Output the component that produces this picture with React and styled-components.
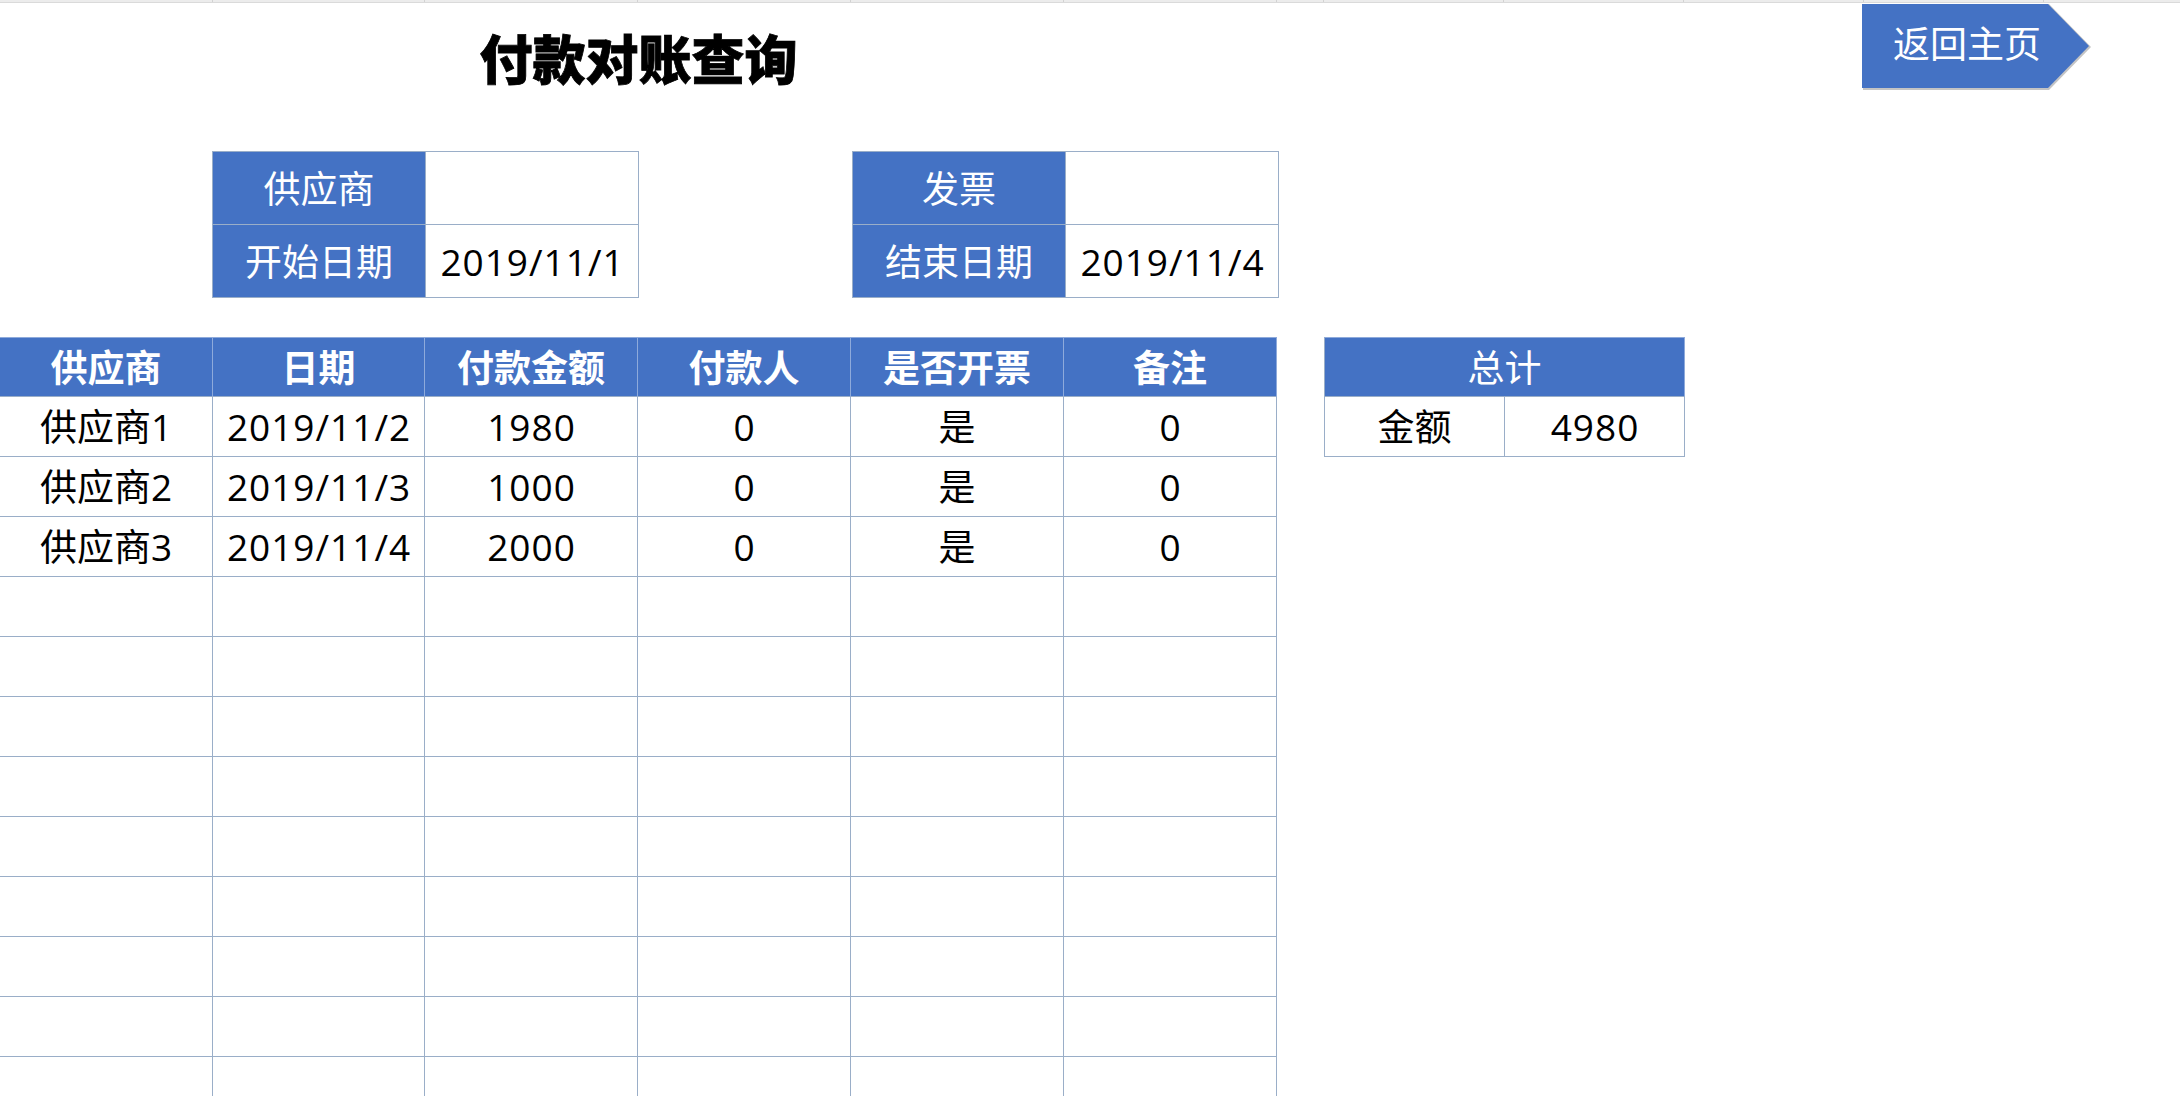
import React from 'react';
import styled, { createGlobalStyle } from 'styled-components';

const GlobalStyle = createGlobalStyle`
    body {
        margin: 0;
        background: #fff;
        overflow: hidden;
        font-family: "Open Sans", "Noto Sans CJK SC", sans-serif;
    }
`;

const BLUE = '#4472c4';
const LINE = '#9aaec8';
const HEAD_LINE = '#8eaadb';

// widths of the sheet columns shown in the thin header strip
const stripCols = [213, 212, 213, 213, 213, 213, 47, 180, 180, 180, 180, 180];

const columns = ['供应商', '日期', '付款金额', '付款人', '是否开票', '备注'];
const colWidths = [213, 212, 213, 213, 213, 213];

const rows = [
    ['供应商1', '2019/11/2', '1980', '0', '是', '0'],
    ['供应商2', '2019/11/3', '1000', '0', '是', '0'],
    ['供应商3', '2019/11/4', '2000', '0', '是', '0'],
];
const EMPTY_ROWS = 9;

const Sheet = styled.div`
    width: 2180px;
    height: 1096px;
    overflow: hidden;
    background: #fff;
`;

const Strip = styled.div`
    display: flex;
    height: 2px;
    background: #ececec;
    border-bottom: 1px solid #dadada;
`;

const StripCol = styled.div`
    flex: 0 0 ${(p) => p.$w}px;
    box-sizing: border-box;
    border-right: 1px solid #d2d2d2;
`;

const TopBar = styled.div`
    display: flex;
    align-items: flex-start;
    height: 148px;
`;

const Title = styled.h1`
    margin: 0;
    width: 1277px;
    height: 112px;
    display: flex;
    align-items: center;
    justify-content: center;
    font-size: 53px;
    font-weight: 900;
    color: #000;
    line-height: 1;
    -webkit-text-stroke: 0.8px #000;
`;

const HomeButton = styled.div`
    position: relative;
    margin-left: 585px;
    margin-top: 1px;
    width: 232px;
    height: 87px;
    cursor: pointer;
`;

const ButtonShape = styled.svg`
    position: absolute;
    inset: 0;
`;

const ButtonLabel = styled.span`
    position: absolute;
    left: 31px;
    top: 0;
    height: 79px;
    display: flex;
    align-items: center;
    font-size: 37px;
    color: #fff;
    line-height: 1;
`;

const ParamsRow = styled.div`
    display: flex;
    gap: 213px;
    padding-left: 212px;
`;

const ParamBox = styled.div`
    display: grid;
    grid-template-columns: 213px 213px;
    border-top: 1px solid ${LINE};
    border-left: 1px solid ${LINE};
`;

const ParamCell = styled.div`
    box-sizing: border-box;
    height: 73px;
    display: flex;
    align-items: center;
    justify-content: center;
    font-size: 37px;
    line-height: 1;
    color: ${(p) => (p.$label ? '#fff' : '#000')};
    background: ${(p) => (p.$label ? BLUE : '#fff')};
    border-right: 1px solid ${LINE};
    border-bottom: 1px solid ${LINE};
`;

const Main = styled.div`
    display: flex;
    align-items: flex-start;
    gap: 47px;
    margin-top: 39px;
`;

const Grid = styled.div`
    display: grid;
    grid-template-columns: ${(p) => p.$cols};
    border-top: 1px solid ${HEAD_LINE};
    border-left: ${(p) => (p.$boxed ? `1px solid ${LINE}` : 'none')};
`;

const Cell = styled.div`
    box-sizing: border-box;
    height: ${(p) => (p.$head ? 59 : 60)}px;
    display: flex;
    align-items: center;
    justify-content: center;
    font-size: 37px;
    line-height: 1;
    white-space: nowrap;
    color: ${(p) => (p.$head ? '#fff' : '#000')};
    background: ${(p) => (p.$head ? BLUE : '#fff')};
    font-weight: ${(p) => (p.$bold ? 700 : 400)};
    border-right: 1px solid ${(p) => (p.$head ? HEAD_LINE : LINE)};
    border-bottom: 1px solid ${LINE};
    grid-column: ${(p) => (p.$span ? `span ${p.$span}` : 'auto')};
`;

// digits in the sheet font run a touch wider than Open Sans
const Num = styled.span`
    letter-spacing: 1px;
    margin-right: -1px;
`;

const val = (v) => (/^[\d/]+$/.test(v) ? <Num>{v}</Num> : v);

const App = () => {
    const emptyRows = Array.from({ length: EMPTY_ROWS }, () => Array(6).fill(''));

    return (
        <Sheet>
            <GlobalStyle />
            <Strip>
                {stripCols.map((w, i) => <StripCol key={i} $w={w} />)}
            </Strip>

            <TopBar>
                <Title>付款对账查询</Title>
                <HomeButton>
                    <ButtonShape width="232" height="87" viewBox="0 0 232 87">
                        <polygon
                            points="1,0 187,0 229,43 187,86 1,86"
                            fill="#c4c4c4"
                        />
                        <polygon
                            points="0,0 186,0 227,42 186,84 0,84"
                            fill={BLUE}
                        />
                    </ButtonShape>
                    <ButtonLabel>返回主页</ButtonLabel>
                </HomeButton>
            </TopBar>

            <ParamsRow>
                <ParamBox>
                    <ParamCell $label>供应商</ParamCell>
                    <ParamCell></ParamCell>
                    <ParamCell $label>开始日期</ParamCell>
                    <ParamCell>{val('2019/11/1')}</ParamCell>
                </ParamBox>
                <ParamBox>
                    <ParamCell $label>发票</ParamCell>
                    <ParamCell></ParamCell>
                    <ParamCell $label>结束日期</ParamCell>
                    <ParamCell>{val('2019/11/4')}</ParamCell>
                </ParamBox>
            </ParamsRow>

            <Main>
                <Grid $cols={colWidths.map((w) => `${w}px`).join(' ')}>
                    {columns.map((c) => (
                        <Cell key={c} $head $bold>{c}</Cell>
                    ))}
                    {[...rows, ...emptyRows].map((r, ri) =>
                        r.map((v, ci) => <Cell key={`${ri}-${ci}`}>{val(v)}</Cell>)
                    )}
                </Grid>

                <Grid $cols="180px 180px" $boxed>
                    <Cell $head $span={2}>总计</Cell>
                    <Cell>金额</Cell>
                    <Cell>{val('4980')}</Cell>
                </Grid>
            </Main>
        </Sheet>
    );
};

export default App;
